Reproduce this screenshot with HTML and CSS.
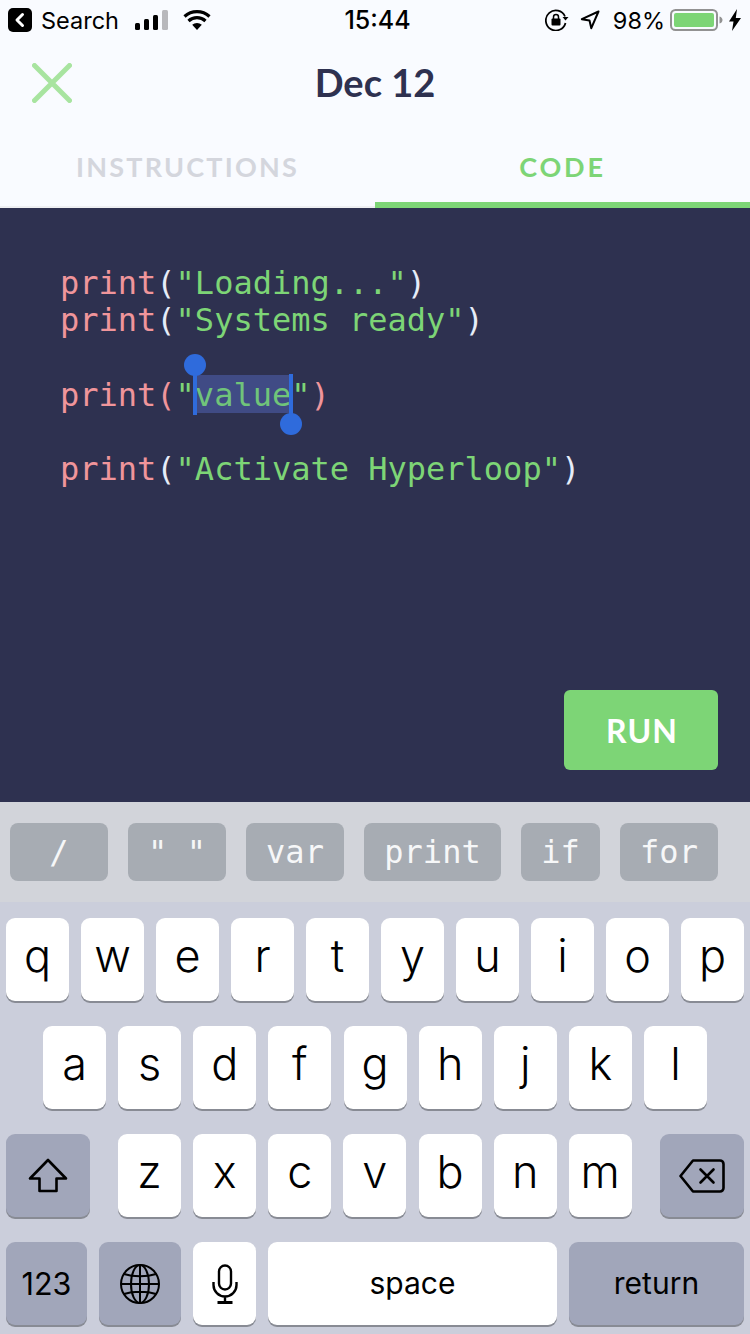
FILE: index.html
```html
<!DOCTYPE html>
<html lang="en">
<head>
<meta charset="utf-8">
<title>Dec 12</title>
<link rel="stylesheet" href="styles.css">
</head>
<body>
<div class="page">
  <div class="status">
    <div class="status-left">
      <svg class="back-badge" width="24" height="24" viewBox="0 0 24 24"><rect width="24" height="24" rx="5" fill="#000"/><path d="M14.500 6.500 9 12l5.500 5.500" fill="none" stroke="#fff" stroke-width="3" stroke-linecap="round" stroke-linejoin="round"/></svg>
      <span class="search">Search</span>
      <svg class="signal" width="34" height="20" viewBox="0 0 34 20"><rect x="0" y="13" width="5" height="7" rx="1.500" fill="#000"/><rect x="9" y="9" width="5" height="11" rx="1.500" fill="#000"/><rect x="18" y="5" width="5" height="15" rx="1.500" fill="#000"/><rect x="27" y="0" width="6" height="20" rx="1.500" fill="#b8b8bc"/></svg>
      <svg class="wifi" width="28" height="20" viewBox="0 0 28 20"><path d="M14 20 9.200 14.800a7 7 0 0 1 9.600 0z" fill="#000"/><path d="M5.500 11a12.500 12.500 0 0 1 17 0M1.500 6.500a18.500 18.500 0 0 1 25 0" fill="none" stroke="#000" stroke-width="3.200"/></svg>
    </div>
    <div class="clock">15:44</div>
    <div class="status-right">
      <svg width="24" height="22" viewBox="0 0 24 22"><path d="M20 7.500A10 10 0 1 0 20.500 14" fill="none" stroke="#000" stroke-width="1.800"/><path d="M17.500 8h6l-3 3.500z" fill="#000"/><rect x="6.500" y="9.500" width="9" height="7" rx="1" fill="#000"/><path d="M8.500 10V8a2.500 2.500 0 0 1 5 0v2" fill="none" stroke="#000" stroke-width="1.500"/></svg>
      <svg class="loc" width="20" height="20" viewBox="0 0 20 20"><path d="M18.500 1.500 1.800 9.200l7.700 1.300 1.800 7.700z" fill="none" stroke="#000" stroke-width="2" stroke-linejoin="round"/></svg>
      <span class="pct">98%</span>
      <svg class="batt" width="54" height="24" viewBox="0 0 54 24"><rect x="1" y="2" width="46" height="20" rx="4.500" fill="none" stroke="#929292" stroke-width="2"/><rect x="4" y="5" width="40" height="14" rx="2" fill="#7dd576"/><path d="M49.500 8.500c2 .5 3 2 3 3.500s-1 3-3 3.500z" fill="#929292"/></svg>
      <svg class="bolt" width="12" height="22" viewBox="0 0 12 22"><path d="M8 0 0 12.500h4.500L3 22l9-13H6.800z" fill="#000"/></svg>
    </div>
  </div>

  <header class="nav">
    <svg class="close" width="40" height="40" viewBox="0 0 40 40"><path d="M2.500 2.500l35 35M37.500 2.500l-35 35" stroke="#a8e4a0" stroke-width="5" stroke-linecap="round"/></svg>
    <h1 class="title">Dec 12</h1>
  </header>

  <div class="tabs">
    <div class="tab">INSTRUCTIONS</div>
    <div class="tab tab-active">CODE</div>
  </div>

  <main class="editor">
    <div class="code">
      <div class="line"><span class="kw">print</span><span class="paren">(</span><span class="str">"Loading..."</span><span class="paren">)</span></div>
      <div class="line"><span class="kw">print</span><span class="paren">(</span><span class="str">"Systems ready"</span><span class="paren">)</span></div>
      <div class="line line-gap">&nbsp;</div>
      <div class="line"><span class="kw">print(</span><span class="str">"</span><span class="sel"><span class="str">value</span><i class="caret caret-start"></i><i class="caret caret-end"></i></span><span class="str">"</span><span class="kw">)</span></div>
      <div class="line">&nbsp;</div>
      <div class="line"><span class="kw">print</span><span class="paren">(</span><span class="str">"Activate Hyperloop"</span><span class="paren">)</span></div>
    </div>
    <button class="run">RUN</button>
  </main>

  <div class="snippets">
    <div class="snip snip-a">/</div>
    <div class="snip snip-a">" "</div>
    <div class="snip snip-a">var</div>
    <div class="snip snip-b">print</div>
    <div class="snip snip-c">if</div>
    <div class="snip snip-c">for</div>
  </div>

  <div class="keyboard">
    <div class="row">
      <div class="key">q</div><div class="key">w</div><div class="key">e</div><div class="key">r</div><div class="key">t</div><div class="key">y</div><div class="key">u</div><div class="key">i</div><div class="key">o</div><div class="key">p</div>
    </div>
    <div class="row row-two">
      <div class="key">a</div><div class="key">s</div><div class="key">d</div><div class="key">f</div><div class="key">g</div><div class="key">h</div><div class="key">j</div><div class="key">k</div><div class="key">l</div>
    </div>
    <div class="row row-three">
      <div class="key key-dark key-side"><svg width="40" height="36" viewBox="0 0 40 36"><path d="M20 2 2 20.500h9.500V33h17V20.500H38z" fill="none" stroke="#000" stroke-width="2.600" stroke-linejoin="round"/></svg></div>
      <div class="letters">
        <div class="key">z</div><div class="key">x</div><div class="key">c</div><div class="key">v</div><div class="key">b</div><div class="key">n</div><div class="key">m</div>
      </div>
      <div class="key key-dark key-side"><svg width="46" height="34" viewBox="0 0 46 34"><path d="M14 1.500h27a3.500 3.500 0 0 1 3.500 3.500v24a3.500 3.500 0 0 1-3.500 3.500H14L1.500 17z" fill="none" stroke="#000" stroke-width="2.600" stroke-linejoin="round"/><path d="M21.500 10.500l13 13M34.500 10.500l-13 13" stroke="#000" stroke-width="2.600" stroke-linecap="round"/></svg></div>
    </div>
    <div class="row">
      <div class="key key-dark key-123">123</div>
      <div class="key key-dark key-globe"><svg width="40" height="40" viewBox="0 0 40 40" fill="none" stroke="#000" stroke-width="2"><circle cx="20" cy="20" r="19"/><ellipse cx="20" cy="20" rx="9" ry="19"/><path d="M20 1v38M1 20h38M4 10c9 3 23 3 32 0M4 30c9-3 23-3 32 0"/></svg></div>
      <div class="key key-mic"><svg width="26" height="40" viewBox="0 0 26 40" fill="none" stroke="#000" stroke-width="2.400"><rect x="7" y="1.500" width="12" height="24" rx="6"/><path d="M1.500 18v3a11.500 11.500 0 0 0 23 0v-3M13 32.500V38"/><path d="M5.500 38.500h15" stroke-width="3"/></svg></div>
      <div class="key key-space">space</div>
      <div class="key key-dark key-return">return</div>
    </div>
  </div>
</div>
</body>
</html>
```
FILE: styles.css
```css
* { box-sizing: border-box; }
html, body { margin: 0; padding: 0; }
body { background: #f9fbff; font-family: Inter, "Liberation Sans", sans-serif; }
.page { width: 750px; height: 1334px; overflow: hidden; display: flex; flex-direction: column; }

.status { height: 40px; display: flex; align-items: center; justify-content: space-between; padding: 0 9px 0 8px; position: relative; color: #000; }
.status-left, .status-right { display: flex; align-items: center; }
.search { font-size: 23.500px; margin-left: 9px; }
.signal { margin-left: 16px; }
.wifi { margin-left: 14px; }
.clock { position: absolute; left: 0; right: 0; padding-left: 5px; text-align: center; font-size: 25px; font-weight: 500; pointer-events: none; }
.status-right svg { flex: none; }
.loc { margin-left: 11px; }
.pct { font-size: 23.500px; margin-left: 13px; }
.batt { margin-left: 5px; }
.bolt { margin-left: 5px; }

.nav { height: 86px; display: flex; align-items: center; justify-content: center; position: relative; }
.close { position: absolute; left: 32px; top: 23px; }
.title { margin: 0 0 3px; font-family: Lato, sans-serif; font-size: 38px; font-weight: 700; color: #2e3150; }

.tabs { height: 82px; display: flex; }
.tab { flex: 1; display: flex; justify-content: center; padding-top: 24px; font-family: Lato, sans-serif; font-size: 27px; font-weight: 700; letter-spacing: 2.200px; color: #d4d6dd; border-bottom: 2px solid #eeeff2; }
.tab-active { color: #7dd576; letter-spacing: 2.800px; border-bottom: 6px solid #7dd576; }

.editor { height: 594px; background: #2e3150; display: flex; flex-direction: column; padding: 57px 32px 32px 60px; }
.code { flex: 1; font-family: "DejaVu Sans Mono", monospace; font-size: 32px; line-height: 37px; }
.line { height: 37px; white-space: pre; }
.line-gap { height: 38px; }
.kw { color: #f0959b; }
.str { color: #7dd576; }
.paren { color: #e6ecf8; }
.sel { position: relative; isolation: isolate; display: inline-block; vertical-align: top; }
.sel::before { content: ""; position: absolute; z-index: -1; left: 0; right: 0; top: -2px; height: 38px; background: #404b85; }
.sel .str { color: #70c47a; }
.caret { position: absolute; width: 4px; background: #2f6bdc; }
.caret::after { content: ""; position: absolute; left: -9px; width: 22px; height: 22px; border-radius: 50%; background: #2f6bdc; }
.caret-start { left: -2px; top: -4px; height: 42px; }
.caret-start::after { top: -19px; }
.caret-end { right: -2px; top: -3px; height: 40px; }
.caret-end::after { bottom: -21px; }
.run { align-self: flex-end; width: 154px; height: 80px; padding: 0 0 0 2px; border: 0; border-radius: 6px; background: #7dd576; color: #fff; font-family: Lato, sans-serif; font-size: 32px; font-weight: 700; letter-spacing: 1px; }

.snippets { height: 100px; background: #d2d4da; display: flex; align-items: center; padding: 0 32px 0 10px; gap: 20px; }
.snip { height: 58px; border-radius: 8px; background: #a7acb3; color: #f6f7f8; display: flex; align-items: center; justify-content: center; font-family: "DejaVu Sans Mono", monospace; font-size: 32px; }
.snip-a { width: 98px; }
.snip-b { width: 137px; }
.snip-c { width: 79px; }
.snip-c + .snip-c { width: 98px; }

.keyboard { flex: 1; background: #cbcedb; padding: 16px 6px 0; display: flex; flex-direction: column; gap: 25px; }
.row { display: flex; gap: 12px; }
.row-two { padding-left: 37px; gap: 12.125px; }
.row-three { gap: 0; }
.letters { display: flex; gap: 12.125px; margin: 0 28.250px 0 28px; }
.key { width: 63px; height: 83px; flex: none; background: #fff; border-radius: 9px; box-shadow: 0 2px 0 #888b94; display: flex; align-items: center; justify-content: center; padding-bottom: 8px; color: #000; font-size: 45px; line-height: 1; font-weight: 300; }
.key svg { margin-top: 8px; }
.key-dark { background: #a1a6ba; }
.key-side { width: 84px; }
.key-123 { width: 81px; padding-bottom: 0; padding-top: 2px; font-size: 30.500px; font-weight: 400; }
.key-globe { width: 82px; }
.key-space { width: 289px; padding-bottom: 2px; font-size: 30px; font-weight: 400; }
.key-return { width: 175px; padding-bottom: 2px; font-size: 30px; font-weight: 400; }
```
